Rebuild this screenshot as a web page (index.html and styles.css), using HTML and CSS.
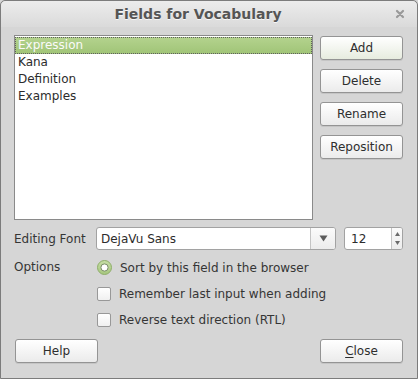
FILE: index.html
```html
<!DOCTYPE html>
<html lang="en">
<head>
  <meta charset="UTF-8">
  <title>Fields for Vocabulary</title>
  <link rel="stylesheet" href="styles.css">
</head>
<body>
  <div class="window">
    <div class="titlebar">
      <span class="title">Fields for Vocabulary</span>
      <svg class="close-x" width="10" height="10" viewBox="0 0 10 10">
        <path d="M2 2 L8 8 M8 2 L2 8" stroke="#9a9a9a" stroke-width="2.2" stroke-linecap="round"/>
      </svg>
    </div>

    <div class="main">
      <ul class="field-list">
        <li class="selected">Expression</li>
        <li>Kana</li>
        <li>Definition</li>
        <li>Examples</li>
      </ul>
      <div class="side-buttons">
        <button class="btn btn-default">Add</button>
        <button class="btn">Delete</button>
        <button class="btn">Rename</button>
        <button class="btn">Reposition</button>
      </div>
    </div>

    <div class="font-row">
      <span class="label">Editing Font</span>
      <div class="combo">
        <span class="combo-text">DejaVu Sans</span>
        <span class="combo-arrow">
          <svg width="9" height="7" viewBox="0 0 9 7"><path d="M0.5 0.5 H8.5 L4.5 6.5 Z" fill="#5c5c5c"/></svg>
        </span>
      </div>
      <div class="spin">
        <span class="spin-text">12</span>
        <span class="spin-arrows">
          <svg width="5" height="4" viewBox="0 0 5 4"><path d="M0 4 H5 L2.5 0 Z" fill="#6a6a6a"/></svg>
          <svg width="5" height="4" viewBox="0 0 5 4"><path d="M0 0 H5 L2.5 4 Z" fill="#6a6a6a"/></svg>
        </span>
      </div>
    </div>

    <div class="options">
      <span class="label">Options</span>
      <div class="option-list">
        <div class="option">
          <svg class="radio" width="15" height="15" viewBox="0 0 15 15">
            <defs>
              <linearGradient id="rg" x1="0" y1="0" x2="0" y2="1">
                <stop offset="0" stop-color="#c6dea5"/>
                <stop offset="1" stop-color="#a6c67e"/>
              </linearGradient>
            </defs>
            <circle cx="7.5" cy="7.5" r="7" fill="url(#rg)" stroke="#8fae6a" stroke-width="1"/>
            <circle cx="7.5" cy="7.5" r="3.6" fill="#ffffff" stroke="#7c8c6c" stroke-width="1"/>
          </svg>
          <span>Sort by this field in the browser</span>
        </div>
        <div class="option">
          <span class="check"></span>
          <span>Remember last input when adding</span>
        </div>
        <div class="option">
          <span class="check"></span>
          <span>Reverse text direction (RTL)</span>
        </div>
      </div>
    </div>

    <div class="footer">
      <button class="btn">Help</button>
      <button class="btn"><u>C</u>lose</button>
    </div>
  </div>
</body>
</html>
```

FILE: styles.css
```css
html, body {
  margin: 0;
  padding: 0;
  background-color: #d6d6d6;
}
body {
  font-family: 'DejaVu Sans', 'Liberation Sans', sans-serif;
  font-size: 12px;
  color: #353535;
}
.window {
  width: 418px;
  height: 379px;
  box-sizing: border-box;
  border: 1px solid #7c7c7c;
  border-radius: 5px 5px 0 0;
  background-color: #d6d6d6;
  display: flex;
  flex-direction: column;
  padding: 0 14px 0 13px;
}
.titlebar {
  height: 26px;
  margin: 0 -14px 0 -13px;
  padding-right: 22px;
  border-radius: 5px 5px 0 0;
  background: linear-gradient(#ececec, #dadada);
  position: relative;
  display: flex;
  justify-content: center;
  align-items: center;
}
.title {
  font-weight: bold;
  font-size: 14px;
  color: #555555;
  text-shadow: 0 1px 0 #f6f6f6;
}
.close-x {
  position: absolute;
  right: 12px;
  top: 8px;
}
.main {
  display: flex;
  justify-content: space-between;
  margin-top: 8px;
  height: 185px;
}
.field-list {
  list-style: none;
  margin: 0;
  padding: 1px 0 0 0;
  width: 299px;
  box-sizing: border-box;
  border: 1px solid #8a8a8a;
  background: #ffffff;
}
.field-list li {
  height: 17px;
  line-height: 17px;
  padding-left: 3px;
  color: #2c2c2c;
  font-size: 12px;
}
.field-list li.selected {
  background: linear-gradient(#b4d38e, #a0c477);
  color: #fafafa;
  outline: 1px dotted #5e5e5e;
  outline-offset: -1px;
}
.side-buttons {
  display: flex;
  flex-direction: column;
  gap: 9px;
  padding-top: 1px;
}
.btn {
  width: 83px;
  height: 24px;
  box-sizing: border-box;
  border: 1px solid #949494;
  border-radius: 3px;
  background: linear-gradient(#ffffff, #ebebeb);
  box-shadow: 0 1px 0 rgba(0, 0, 0, 0.08);
  font-family: 'DejaVu Sans', 'Liberation Sans', sans-serif;
  font-size: 12px;
  color: #2e2e2e;
  padding: 0;
}
.btn-default {
  background: linear-gradient(#ffffff, #e7ecdf);
}
.btn u {
  text-decoration-thickness: 1px;
  text-underline-offset: 2px;
}
.font-row {
  display: flex;
  align-items: center;
  margin-top: 7px;
  height: 23px;
}
.label {
  width: 82px;
  color: #353535;
}
.combo {
  width: 240px;
  height: 23px;
  box-sizing: border-box;
  border: 1px solid #a2a2a2;
  border-radius: 3px;
  background: #ffffff;
  display: flex;
  align-items: center;
}
.combo-text {
  flex: 1;
  padding-left: 4px;
  color: #2c2c2c;
}
.combo-arrow {
  width: 24px;
  height: 21px;
  border-left: 1px solid #c4c4c4;
  background: linear-gradient(#fbfbfb, #ececec);
  border-radius: 0 2px 2px 0;
  display: flex;
  justify-content: center;
  align-items: center;
}
.spin {
  width: 59px;
  height: 23px;
  margin-left: 8px;
  box-sizing: border-box;
  border: 1px solid #a2a2a2;
  border-radius: 3px;
  background: #ffffff;
  display: flex;
  align-items: center;
}
.spin-text {
  flex: 1;
  padding-left: 6px;
  color: #2c2c2c;
}
.spin-arrows {
  width: 11px;
  height: 21px;
  border-left: 1px solid #c4c4c4;
  background: linear-gradient(#fbfbfb, #ececec);
  border-radius: 0 2px 2px 0;
  display: flex;
  flex-direction: column;
  justify-content: space-around;
  align-items: center;
  padding: 2px 0;
  box-sizing: border-box;
}
.spin-arrows svg {
  display: block;
}
.options {
  display: flex;
  margin-top: 9px;
}
.options .label {
  line-height: 17px;
}
.option-list {
  display: flex;
  flex-direction: column;
  gap: 9px;
}
.option {
  display: flex;
  align-items: center;
  height: 17px;
  gap: 8px;
}
.radio {
  display: block;
  margin-left: 1px;
}
.check {
  width: 14px;
  height: 14px;
  box-sizing: border-box;
  margin-left: 1px;
  border: 1px solid #989898;
  border-radius: 2px;
  background: linear-gradient(#ffffff, #f0f0f0);
}
.footer {
  display: flex;
  justify-content: space-between;
  margin-top: 11px;
  padding-left: 1px;
}
```
